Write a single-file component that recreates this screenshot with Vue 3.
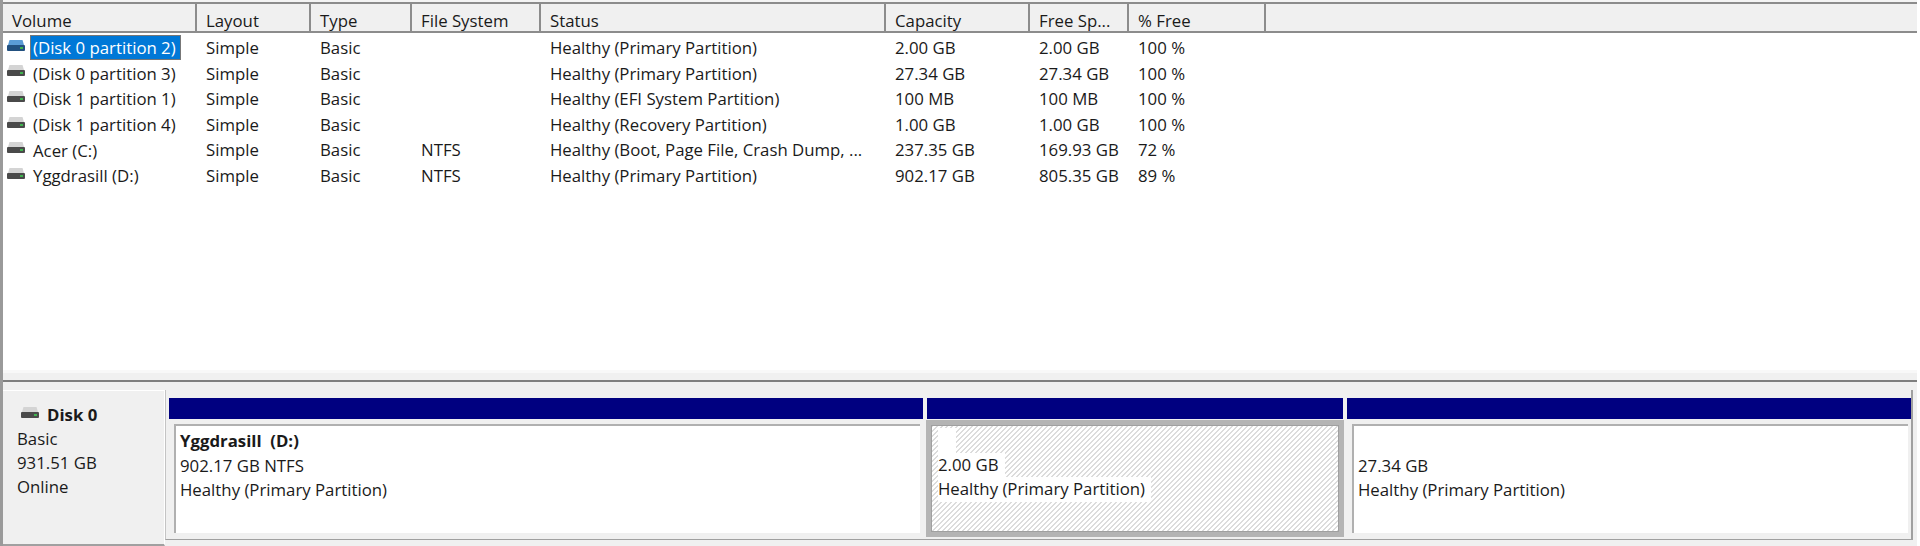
<template>
  <div class="console">
    <!-- VOLUME LIST -->
    <section class="list">
      <div class="list-head">
        <div v-for="c in columns" :key="c" class="head-cell">{{ c }}</div>
        <div class="head-rest"></div>
      </div>
      <div class="list-body">
        <div v-for="(v, i) in volumes" :key="v.name" class="row">
          <div class="cell vol">
            <svg class="drive" :class="{ picked: i === 0 }" width="20" height="14" viewBox="0 0 20 14">
              <path d="M2 6 L3.5 1 H16.5 L18 6 Z" class="drive-top" />
              <rect x="1" y="6" width="18" height="6" rx="1" class="drive-front" />
              <rect x="14" y="8" width="3" height="2" class="drive-led" />
            </svg>
            <span class="vol-name" :class="{ selected: i === 0 }">{{ v.name }}</span>
          </div>
          <div class="cell">Simple</div>
          <div class="cell">Basic</div>
          <div class="cell">{{ v.fs }}</div>
          <div class="cell">{{ v.status }}</div>
          <div class="cell">{{ v.cap }}</div>
          <div class="cell">{{ v.free }}</div>
          <div class="cell">{{ v.pct }}</div>
        </div>
      </div>
      <div class="strip"></div>
    </section>

    <!-- DISK GRAPHIC -->
    <section class="disk">
      <div class="disk-label">
        <div class="disk-title">
          <svg class="drive" width="20" height="14" viewBox="0 0 20 14">
            <path d="M2 6 L3.5 1 H16.5 L18 6 Z" class="drive-top" />
            <rect x="1" y="6" width="18" height="6" rx="1" class="drive-front" />
            <rect x="14" y="8" width="3" height="2" class="drive-led" />
          </svg>
          <b>Disk 0</b>
        </div>
        <div>Basic</div>
        <div>931.51 GB</div>
        <div>Online</div>
      </div>

      <div class="parts">
        <div class="part part-d">
          <div class="part-bar"></div>
          <div class="part-body">
            <div class="part-inner">
              <b>Yggdrasill&nbsp; (D:)</b>
              <div>902.17 GB NTFS</div>
              <div>Healthy (Primary Partition)</div>
            </div>
          </div>
        </div>

        <div class="part part-sel">
          <div class="part-bar"></div>
          <div class="part-body">
            <div class="part-inner hatch">
              <span class="blank"></span>
              <span>2.00 GB</span>
              <span>Healthy (Primary Partition)</span>
            </div>
          </div>
        </div>

        <div class="part part-last">
          <div class="part-bar"></div>
          <div class="part-body">
            <div class="part-inner">
              <div class="blank"></div>
              <div>27.34 GB</div>
              <div>Healthy (Primary Partition)</div>
            </div>
          </div>
        </div>
      </div>
    </section>
  </div>
</template>

<script setup>
const columns = ['Volume', 'Layout', 'Type', 'File System', 'Status', 'Capacity', 'Free Sp...', '% Free']

const volumes = [
  { name: '(Disk 0 partition 2)', fs: '', status: 'Healthy (Primary Partition)', cap: '2.00 GB', free: '2.00 GB', pct: '100 %' },
  { name: '(Disk 0 partition 3)', fs: '', status: 'Healthy (Primary Partition)', cap: '27.34 GB', free: '27.34 GB', pct: '100 %' },
  { name: '(Disk 1 partition 1)', fs: '', status: 'Healthy (EFI System Partition)', cap: '100 MB', free: '100 MB', pct: '100 %' },
  { name: '(Disk 1 partition 4)', fs: '', status: 'Healthy (Recovery Partition)', cap: '1.00 GB', free: '1.00 GB', pct: '100 %' },
  { name: 'Acer (C:)', fs: 'NTFS', status: 'Healthy (Boot, Page File, Crash Dump, ...', cap: '237.35 GB', free: '169.93 GB', pct: '72 %' },
  { name: 'Yggdrasill (D:)', fs: 'NTFS', status: 'Healthy (Primary Partition)', cap: '902.17 GB', free: '805.35 GB', pct: '89 %' }
]
</script>

<style>
html, body {
  margin: 0;
  background: #fff;
}
</style>

<style scoped>
.console {
  width: 1917px;
  height: 546px;
  box-sizing: border-box;
  overflow: hidden;
  display: flex;
  flex-direction: column;
  font-family: "Open Sans", "Noto Sans", sans-serif;
  font-size: 16.8px;
  color: #1a1a1a;
  border-left: 3px solid #9a9a9a;
}

/* LIST */
.list {
  height: 382px;
  flex: none;
  box-sizing: border-box;
  display: flex;
  flex-direction: column;
  padding-top: 2px;
  background: #f4f4f4;
  border-bottom: 2px solid #7f7f7f;
}

.list-head {
  display: grid;
  grid-template-columns: 194px 114px 101px 129px 345px 144px 99px 137px 1fr;
  grid-template-rows: 27px;
  height: 31px;
  flex: none;
  box-sizing: border-box;
  background: #f0f0f0;
  border-top: 2px solid #8c8c8c;
  border-bottom: 2px solid #8c8c8c;
}

.head-cell {
  padding: 7px 0 0 9px;
  line-height: 20px;
  border-right: 2px solid #8c8c8c;
  box-sizing: border-box;
  white-space: nowrap;
}

.list-body {
  flex: 1;
  padding-top: 2px;
  background: #fff;
}

.row {
  display: grid;
  grid-template-columns: 194px 114px 101px 129px 345px 144px 99px 137px 1fr;
  height: 25.6px;
  line-height: 25px;
}

.cell {
  padding-left: 9px;
  white-space: nowrap;
}

.cell.vol {
  padding-left: 3px;
  display: flex;
  align-items: center;
  gap: 4px;
}

.vol-name {
  padding: 0 4px 0 2px;
  border: 1px solid transparent;
  line-height: 23px;
}

.vol-name.selected {
  background: #0078d7;
  border-color: #777;
  color: #fff;
}

.drive {
  flex: none;
  margin-top: -4px;
}

.drive-top {
  fill: #d4d4d4;
}

.drive-front {
  fill: #4a4a4a;
}

.drive-led {
  fill: #3fb34f;
}

.drive.picked .drive-top {
  fill: #5a9bd5;
}

.drive.picked .drive-front {
  fill: #22507f;
}

.strip {
  height: 10px;
  flex: none;
  box-sizing: border-box;
  background: #f0f0f0;
  border-top: 3px solid #f8f8f8;
}

/* DISK PANE */
.disk {
  flex: 1;
  display: flex;
  background: #f0f0f0;
  padding: 8px 4px 0 0;
  min-height: 0;
}

.disk-label {
  width: 162px;
  flex: none;
  box-sizing: border-box;
  border-top: 1px solid #fff;
  border-bottom: 2px solid #a0a0a0;
  border-right: 1px solid #fff;
  padding: 12px 0 0 14px;
  line-height: 24px;
}

.disk-title {
  display: flex;
  align-items: center;
  gap: 7px;
  padding-left: 3px;
}

.parts {
  flex: 1;
  display: flex;
  gap: 4px;
  padding: 8px 0 0 3px;
  box-sizing: border-box;
  height: 150px;
  border-left: 1px solid #c4c4c4;
  border-bottom: 1px solid #a0a0a0;
  border-right: 2px solid #a0a0a0;
}

.part {
  display: flex;
  flex-direction: column;
  box-sizing: border-box;
}

.part-d {
  width: 754px;
}

.part-sel {
  width: 416px;
}

.part-last {
  flex: 1;
}

.part-bar {
  height: 21px;
  background: #000080;
  flex: none;
}

.part-body {
  flex: 1;
  padding: 5px 3px 6px 5px;
  box-sizing: border-box;
  display: flex;
  min-height: 0;
}

.part-inner {
  flex: 1;
  background: #fff;
  border-top: 2px solid #b0b0b0;
  border-left: 2px solid #b0b0b0;
  box-sizing: border-box;
  padding: 3px 0 0 4px;
  line-height: 24.5px;
  display: flex;
  flex-direction: column;
  align-items: flex-start;
}

.blank {
  height: 24.5px;
  width: 12px;
}

.part-sel .part-body {
  background: #b4b4b4;
  margin: 1px -1px 2px;
  padding: 5px;
}

.part-inner.hatch {
  border: 1px solid #a0a0a0;
  padding: 2px 0 0 6px;
  background: repeating-linear-gradient(135deg, #dcdcdc 0 1.06px, #fff 1.06px 3.5355px);
}

.hatch span {
  background: #fff;
  padding-right: 6px;
}
</style>
